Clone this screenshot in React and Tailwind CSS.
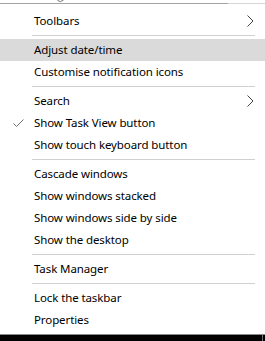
import React from "react";

const menu = [
  { label: "Toolbars", sub: true },
  "sep",
  { label: "Adjust date/time", hover: true },
  { label: "Customise notification icons" },
  "sep",
  { label: "Search", sub: true },
  { label: "Show Task View button", checked: true },
  { label: "Show touch keyboard button" },
  "sep",
  { label: "Cascade windows" },
  { label: "Show windows stacked" },
  { label: "Show windows side by side" },
  { label: "Show the desktop" },
  "sep",
  { label: "Task Manager" },
  "sep",
  { label: "Lock the taskbar" },
  { label: "Properties" },
];

function MenuItem({ item }) {
  return (
    <div
      className={
        "relative flex h-[22px] items-center pl-[34px] pr-[11px] " +
        (item.hover ? "bg-[#dadada]" : "")
      }
    >
      {item.checked && (
        <svg
          className="absolute left-[13px] top-[7px]"
          width="11"
          height="9"
          viewBox="0 0 11 9"
        >
          <polyline
            points="0.5,4.5 3.5,7.5 10.5,0.5"
            fill="none"
            stroke="#6f6f6f"
            strokeWidth="1"
          />
        </svg>
      )}
      <span className="flex-1 text-[11.5px] leading-[22px] tracking-[-0.1px] text-black">
        {item.label}
      </span>
      {item.sub && (
        <svg width="7" height="12" viewBox="0 0 7 12">
          <polyline
            points="0.5,0.5 6,6 0.5,11.5"
            fill="none"
            stroke="#444"
            strokeWidth="1"
          />
        </svg>
      )}
    </div>
  );
}

export default function App() {
  return (
    <div
      className="flex h-[341px] w-[265px] flex-col overflow-hidden bg-white"
      style={{ fontFamily: '"Noto Sans", "Open Sans", sans-serif' }}
    >
      {/* bit of the window above the menu */}
      <div className="relative h-[3px]">
        <svg className="absolute left-[57px] top-0" width="7" height="3" viewBox="0 0 7 3">
          <path d="M0.5 0.5 Q3.5 3 6.5 0" fill="none" stroke="#777" strokeWidth="1" />
        </svg>
      </div>
      <div className="flex h-px">
        <div className="w-[228px] bg-[#a3a3a3]" />
        <div className="flex-1 bg-[#d6d6d6]" />
      </div>

      {/* context menu */}
      <div className="flex flex-1 flex-col pt-[6px]">
        {menu.map((item, i) =>
          item === "sep" ? (
            <div key={i} className="py-[3px] pl-[32px] pr-[10px]">
              <div className="h-px bg-[#d0d0d0]" />
            </div>
          ) : (
            <MenuItem key={i} item={item} />
          )
        )}
      </div>

      {/* taskbar */}
      <div className="h-px bg-[#8a8a8a]" />
      <div className="flex h-[6px] bg-black">
        <div className="flex-1" />
        <div className="mr-[2px] w-px bg-[#777]" />
      </div>
    </div>
  );
}
